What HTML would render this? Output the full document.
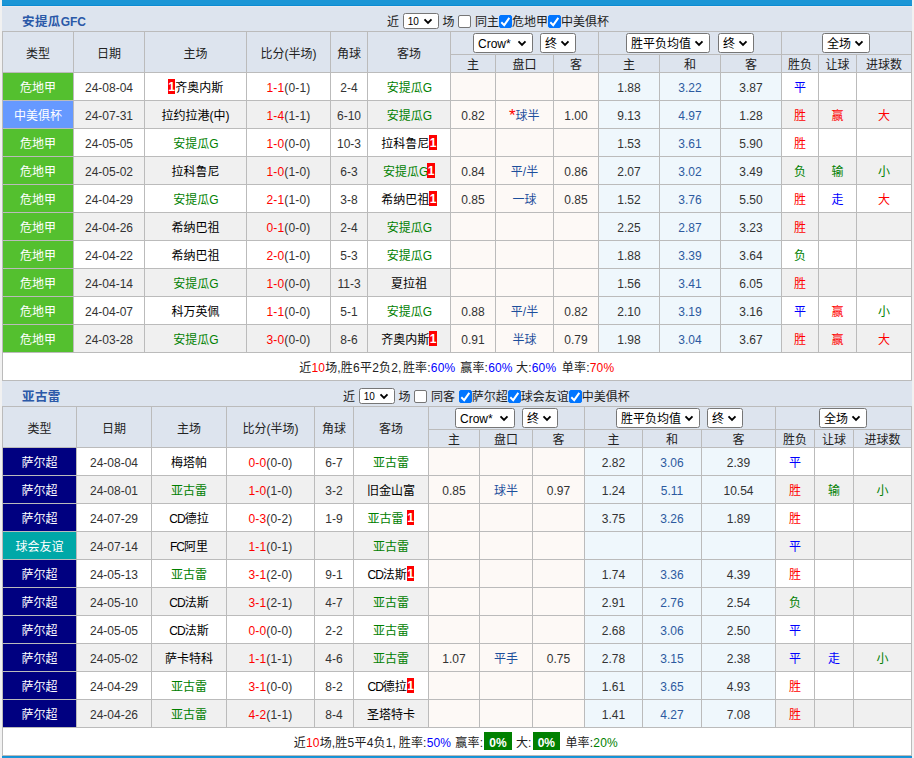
<!DOCTYPE html>
<html lang="zh-CN">
<head>
<meta charset="utf-8">
<title>近期战绩</title>
<style>
html,body{margin:0;padding:0;background:#f1f1f1;}
body{width:914px;height:758px;overflow:hidden;font-family:"Liberation Sans","Noto Sans CJK SC",sans-serif;font-size:12px;color:#333;}
.wrap{position:absolute;left:2px;top:0;width:910px;border-top:5px solid #1b96d6;}
.wrap:before{content:"";display:block;height:1px;background:#0b8bd2;}
.bar{position:relative;height:25px;background:#dde4ee;}
.bar.first{border-top:1px solid #e8eaef;height:24px;}
.bar.first .ctl,.bar.first .ttl{margin-top:-1px;}
.ttl{position:absolute;left:20px;top:4px;line-height:25px;font-family:"Liberation Sans","Noto Sans CJK SC",sans-serif;font-weight:bold;font-size:12.5px;letter-spacing:0.4px;color:#2b59a8;}
.ctl{position:absolute;top:4px;line-height:25px;white-space:pre;color:#222;word-spacing:0.42px;}
table.t{border-collapse:separate;border-spacing:1px;background:#bbb;table-layout:fixed;width:910px;}
table.t td,table.t th{padding:0;text-align:center;font-weight:normal;overflow:hidden;white-space:nowrap;}
tr.h1 th,tr.h2 th{background:#dde4ee;color:#222;}
tr.h1{height:22px;}
tr.h2{height:17px;}
td.n,td.hr{padding-top:2px !important;}
tr.h2 th{line-height:14px;padding-top:3px;}
tr.h1 th{padding-top:0;}
tr.h1 th.sc{padding-top:0;}
tr.o{height:27px;}
tr.o td{background:#fff;}
tr.e{height:27px;}
tr.e td{background:#f0f0f0;}
tr.o td.ah,tr.e td.ah{background:#fdf9f6;}
tr.o td.eu,tr.e td.eu{background:#eff7fc;}
td.k{color:#000;}
td.lg{color:#fff;}
tr td.gt{background:#54c02f;}
tr td.cc{background:#6699ff;}
tr td.sv{background:#000080;}
tr td.fr{background:#00a8a8;}
.me{color:#008000;}
.r{color:#ff0000;}
.b{color:#0000ff;}
.g{color:#008000;}
td.pk{color:#1d4f9c;}
td.dr{color:#2c5aa0;}
.rc{background:#f00;color:#fff;font-weight:bold;display:inline-block;line-height:17px;height:15px;overflow:hidden;width:7.6px;text-align:center;vertical-align:middle;position:relative;top:-3px;}
tr.sm td{background:#fff;height:27px;color:#222;}
.sw2{position:relative;height:27px;text-align:left;}
.sg{position:absolute;top:2px;line-height:27px;white-space:nowrap;letter-spacing:0.2px;}
.z{background:#008000;color:#fff;font-weight:bold;padding:4px 5px 0 5px;margin:0 0 0 1px;letter-spacing:0;}
.sel{display:inline-block;position:relative;box-sizing:border-box;height:20px;border:1px solid #767676;border-radius:2.5px;background:#fff;vertical-align:middle;text-align:left;color:#000;font-size:12px;line-height:18px;font-family:"Liberation Sans","Noto Sans CJK SC",sans-serif;}
.sel .st{position:absolute;left:4px;top:1px;}
.sel .ar{position:absolute;right:5px;top:6px;}
.sw{position:relative;height:22px;}
.sel.ab{position:absolute;top:1px;}
.sel.sm10{height:16px;font-size:10px;line-height:14px;top:-2px;}
.sel.sm10 .ar{top:4px;}
.cb{display:inline-block;box-sizing:border-box;width:13px;height:13px;border:1px solid #767676;border-radius:2px;background:#fff;vertical-align:middle;position:relative;top:-1px;}
.cb.on{background:#0075ff;border-color:#0075ff;}
.cb svg{position:absolute;left:-1px;top:-1px;}
.foot{height:6px;background:#1b96d6;border-top:1px solid #1391d6;margin-top:0;}
.la{font-size:12px;font-weight:bold;letter-spacing:0;}
.as{display:inline-block;width:6px;font-size:17px;line-height:0;text-align:center;position:relative;top:0.5px;left:-0.5px;}
.lt{letter-spacing:-1px;}
td.sx{letter-spacing:0.18px;}
</style>
</head>
<body>
<div class="wrap">
<div class="bar first"><span class="ttl">安提瓜<span class="la">GFC</span></span><span class="ctl" style="left:385px">近 <span class="sel sm10" style="width:36px"><span class="st">10</span><svg class="ar" viewBox="0 0 10 7" width="10" height="7"><path d="M1.5 1.3 L5 4.8 L8.5 1.3" fill="none" stroke="#000" stroke-width="1.9" stroke-linecap="butt" stroke-linejoin="miter"/></svg></span> 场 <span class="cb"></span> 同主<span class="cb on"><svg viewBox="0 0 13 13" width="13" height="13"><path d="M2.3 7.3 L5.2 10.1 L10.3 2.9" fill="none" stroke="#fff" stroke-width="2" stroke-linecap="butt" stroke-linejoin="miter"/></svg></span>危地甲<span class="cb on"><svg viewBox="0 0 13 13" width="13" height="13"><path d="M2.3 7.3 L5.2 10.1 L10.3 2.9" fill="none" stroke="#fff" stroke-width="2" stroke-linecap="butt" stroke-linejoin="miter"/></svg></span>中美俱杯</span></div><table class="t" cellspacing="1" cellpadding="0">
<colgroup><col style="width:70px"><col style="width:70px"><col style="width:101px"><col style="width:83px"><col style="width:36px"><col style="width:82px"><col style="width:44px"><col style="width:57px"><col style="width:44px"><col style="width:60px"><col style="width:60px"><col style="width:60px"><col style="width:36px"><col style="width:37px"><col style="width:54px"></colgroup>
<tr class="h1"><th rowspan="2">类型</th><th rowspan="2">日期</th><th rowspan="2">主场</th><th rowspan="2">比分(半场)</th><th rowspan="2">角球</th><th rowspan="2">客场</th><th colspan="3" class="sc"><div class="sw"><span class="sel ab" style="width:60px;left:22px"><span class="st">Crow*</span><svg class="ar" viewBox="0 0 10 7" width="10" height="7"><path d="M1.5 1.3 L5 4.8 L8.5 1.3" fill="none" stroke="#000" stroke-width="1.9" stroke-linecap="butt" stroke-linejoin="miter"/></svg></span><span class="sel ab" style="width:36px;left:89px"><span class="st">终</span><svg class="ar" viewBox="0 0 10 7" width="10" height="7"><path d="M1.5 1.3 L5 4.8 L8.5 1.3" fill="none" stroke="#000" stroke-width="1.9" stroke-linecap="butt" stroke-linejoin="miter"/></svg></span></div></th><th colspan="3" class="sc"><div class="sw"><span class="sel ab" style="width:84px;left:27px"><span class="st">胜平负均值</span><svg class="ar" viewBox="0 0 10 7" width="10" height="7"><path d="M1.5 1.3 L5 4.8 L8.5 1.3" fill="none" stroke="#000" stroke-width="1.9" stroke-linecap="butt" stroke-linejoin="miter"/></svg></span><span class="sel ab" style="width:36px;left:119px"><span class="st">终</span><svg class="ar" viewBox="0 0 10 7" width="10" height="7"><path d="M1.5 1.3 L5 4.8 L8.5 1.3" fill="none" stroke="#000" stroke-width="1.9" stroke-linecap="butt" stroke-linejoin="miter"/></svg></span></div></th><th colspan="3" class="sc"><div class="sw"><span class="sel ab" style="width:48px;left:40px"><span class="st">全场</span><svg class="ar" viewBox="0 0 10 7" width="10" height="7"><path d="M1.5 1.3 L5 4.8 L8.5 1.3" fill="none" stroke="#000" stroke-width="1.9" stroke-linecap="butt" stroke-linejoin="miter"/></svg></span></div></th></tr>
<tr class="h2"><th>主</th><th>盘口</th><th>客</th><th>主</th><th>和</th><th>客</th><th>胜负</th><th>让球</th><th>进球数</th></tr>
<tr class="o"><td class="lg gt">危地甲</td><td class="n">24-08-04</td><td class="k hr"><span class="rc">1</span>齐奥内斯</td><td class="n sx"><span class="r">1-1</span>(0-1)</td><td class="n">2-4</td><td class="k"><span class="me">安提瓜<span class="lt">G</span></span></td><td class="ah n"></td><td class="ah pk"></td><td class="ah n"></td><td class="eu n">1.88</td><td class="eu dr n">3.22</td><td class="eu n">3.87</td><td class="k"><span class="b">平</span></td><td class="k"></td><td class="k"></td></tr>
<tr class="e"><td class="lg cc">中美俱杯</td><td class="n">24-07-31</td><td class="k">拉约拉港(中)</td><td class="n sx"><span class="r">1-4</span>(1-1)</td><td class="n">6-10</td><td class="k"><span class="me">安提瓜<span class="lt">G</span></span></td><td class="ah n">0.82</td><td class="ah pk"><span class="r as">*</span>球半</td><td class="ah n">1.00</td><td class="eu n">9.13</td><td class="eu dr n">4.97</td><td class="eu n">1.28</td><td class="k"><span class="r">胜</span></td><td class="k"><span class="r">赢</span></td><td class="k"><span class="r">大</span></td></tr>
<tr class="o"><td class="lg gt">危地甲</td><td class="n">24-05-05</td><td class="k"><span class="me">安提瓜<span class="lt">G</span></span></td><td class="n sx"><span class="r">1-0</span>(0-0)</td><td class="n">10-3</td><td class="k hr">拉科鲁尼<span class="rc">1</span></td><td class="ah n"></td><td class="ah pk"></td><td class="ah n"></td><td class="eu n">1.53</td><td class="eu dr n">3.61</td><td class="eu n">5.90</td><td class="k"><span class="r">胜</span></td><td class="k"></td><td class="k"></td></tr>
<tr class="e"><td class="lg gt">危地甲</td><td class="n">24-05-02</td><td class="k">拉科鲁尼</td><td class="n sx"><span class="r">1-0</span>(1-0)</td><td class="n">6-3</td><td class="k hr"><span class="me">安提瓜<span class="lt">G</span></span><span class="rc">1</span></td><td class="ah n">0.84</td><td class="ah pk">平/半</td><td class="ah n">0.86</td><td class="eu n">2.07</td><td class="eu dr n">3.02</td><td class="eu n">3.49</td><td class="k"><span class="g">负</span></td><td class="k"><span class="g">输</span></td><td class="k"><span class="g">小</span></td></tr>
<tr class="o"><td class="lg gt">危地甲</td><td class="n">24-04-29</td><td class="k"><span class="me">安提瓜<span class="lt">G</span></span></td><td class="n sx"><span class="r">2-1</span>(1-0)</td><td class="n">3-8</td><td class="k hr">希纳巴祖<span class="rc">1</span></td><td class="ah n">0.85</td><td class="ah pk">一球</td><td class="ah n">0.85</td><td class="eu n">1.52</td><td class="eu dr n">3.76</td><td class="eu n">5.50</td><td class="k"><span class="r">胜</span></td><td class="k"><span class="b">走</span></td><td class="k"><span class="r">大</span></td></tr>
<tr class="e"><td class="lg gt">危地甲</td><td class="n">24-04-26</td><td class="k">希纳巴祖</td><td class="n sx"><span class="r">0-1</span>(0-0)</td><td class="n">2-4</td><td class="k"><span class="me">安提瓜<span class="lt">G</span></span></td><td class="ah n"></td><td class="ah pk"></td><td class="ah n"></td><td class="eu n">2.25</td><td class="eu dr n">2.87</td><td class="eu n">3.23</td><td class="k"><span class="r">胜</span></td><td class="k"></td><td class="k"></td></tr>
<tr class="o"><td class="lg gt">危地甲</td><td class="n">24-04-22</td><td class="k">希纳巴祖</td><td class="n sx"><span class="r">2-0</span>(1-0)</td><td class="n">5-3</td><td class="k"><span class="me">安提瓜<span class="lt">G</span></span></td><td class="ah n"></td><td class="ah pk"></td><td class="ah n"></td><td class="eu n">1.88</td><td class="eu dr n">3.39</td><td class="eu n">3.64</td><td class="k"><span class="g">负</span></td><td class="k"></td><td class="k"></td></tr>
<tr class="e"><td class="lg gt">危地甲</td><td class="n">24-04-14</td><td class="k"><span class="me">安提瓜<span class="lt">G</span></span></td><td class="n sx"><span class="r">1-0</span>(0-0)</td><td class="n">11-3</td><td class="k">夏拉祖</td><td class="ah n"></td><td class="ah pk"></td><td class="ah n"></td><td class="eu n">1.56</td><td class="eu dr n">3.41</td><td class="eu n">6.05</td><td class="k"><span class="r">胜</span></td><td class="k"></td><td class="k"></td></tr>
<tr class="o"><td class="lg gt">危地甲</td><td class="n">24-04-07</td><td class="k">科万英佩</td><td class="n sx"><span class="r">1-1</span>(0-0)</td><td class="n">5-1</td><td class="k"><span class="me">安提瓜<span class="lt">G</span></span></td><td class="ah n">0.88</td><td class="ah pk">平/半</td><td class="ah n">0.82</td><td class="eu n">2.10</td><td class="eu dr n">3.19</td><td class="eu n">3.16</td><td class="k"><span class="b">平</span></td><td class="k"><span class="r">赢</span></td><td class="k"><span class="g">小</span></td></tr>
<tr class="e"><td class="lg gt">危地甲</td><td class="n">24-03-28</td><td class="k"><span class="me">安提瓜<span class="lt">G</span></span></td><td class="n sx"><span class="r">3-0</span>(0-0)</td><td class="n">8-6</td><td class="k hr">齐奥内斯<span class="rc">1</span></td><td class="ah n">0.91</td><td class="ah pk">半球</td><td class="ah n">0.79</td><td class="eu n">1.98</td><td class="eu dr n">3.04</td><td class="eu n">3.67</td><td class="k"><span class="r">胜</span></td><td class="k"><span class="r">赢</span></td><td class="k"><span class="r">大</span></td></tr>
<tr class="sm"><td colspan="15"><div class="sw2"><span class="sg" style="left:296.2px">近<span class="r">10</span>场,胜6平2负2,</span><span class="sg" style="left:399.9px">胜率:<span class="b">60%</span></span><span class="sg" style="left:457.2px">赢率:<span class="b">60%</span></span><span class="sg" style="left:513.0px">大:<span class="b">60%</span></span><span class="sg" style="left:558.8px">单率:<span class="r">70%</span></span></div></td></tr>
</table>
<div class="bar"><span class="ttl">亚古雷</span><span class="ctl" style="left:341px">近 <span class="sel sm10" style="width:36px"><span class="st">10</span><svg class="ar" viewBox="0 0 10 7" width="10" height="7"><path d="M1.5 1.3 L5 4.8 L8.5 1.3" fill="none" stroke="#000" stroke-width="1.9" stroke-linecap="butt" stroke-linejoin="miter"/></svg></span> 场 <span class="cb"></span> 同客 <span class="cb on"><svg viewBox="0 0 13 13" width="13" height="13"><path d="M2.3 7.3 L5.2 10.1 L10.3 2.9" fill="none" stroke="#fff" stroke-width="2" stroke-linecap="butt" stroke-linejoin="miter"/></svg></span>萨尔超<span class="cb on"><svg viewBox="0 0 13 13" width="13" height="13"><path d="M2.3 7.3 L5.2 10.1 L10.3 2.9" fill="none" stroke="#fff" stroke-width="2" stroke-linecap="butt" stroke-linejoin="miter"/></svg></span>球会友谊<span class="cb on"><svg viewBox="0 0 13 13" width="13" height="13"><path d="M2.3 7.3 L5.2 10.1 L10.3 2.9" fill="none" stroke="#fff" stroke-width="2" stroke-linecap="butt" stroke-linejoin="miter"/></svg></span>中美俱杯</span></div><table class="t" cellspacing="1" cellpadding="0">
<colgroup><col style="width:73px"><col style="width:74px"><col style="width:74px"><col style="width:87px"><col style="width:38px"><col style="width:74px"><col style="width:50px"><col style="width:52px"><col style="width:51px"><col style="width:57px"><col style="width:58px"><col style="width:73px"><col style="width:38px"><col style="width:38px"><col style="width:57px"></colgroup>
<tr class="h1"><th rowspan="2">类型</th><th rowspan="2">日期</th><th rowspan="2">主场</th><th rowspan="2">比分(半场)</th><th rowspan="2">角球</th><th rowspan="2">客场</th><th colspan="3" class="sc"><div class="sw"><span class="sel ab" style="width:60px;left:26px"><span class="st">Crow*</span><svg class="ar" viewBox="0 0 10 7" width="10" height="7"><path d="M1.5 1.3 L5 4.8 L8.5 1.3" fill="none" stroke="#000" stroke-width="1.9" stroke-linecap="butt" stroke-linejoin="miter"/></svg></span><span class="sel ab" style="width:36px;left:93px"><span class="st">终</span><svg class="ar" viewBox="0 0 10 7" width="10" height="7"><path d="M1.5 1.3 L5 4.8 L8.5 1.3" fill="none" stroke="#000" stroke-width="1.9" stroke-linecap="butt" stroke-linejoin="miter"/></svg></span></div></th><th colspan="3" class="sc"><div class="sw"><span class="sel ab" style="width:84px;left:31px"><span class="st">胜平负均值</span><svg class="ar" viewBox="0 0 10 7" width="10" height="7"><path d="M1.5 1.3 L5 4.8 L8.5 1.3" fill="none" stroke="#000" stroke-width="1.9" stroke-linecap="butt" stroke-linejoin="miter"/></svg></span><span class="sel ab" style="width:36px;left:122px"><span class="st">终</span><svg class="ar" viewBox="0 0 10 7" width="10" height="7"><path d="M1.5 1.3 L5 4.8 L8.5 1.3" fill="none" stroke="#000" stroke-width="1.9" stroke-linecap="butt" stroke-linejoin="miter"/></svg></span></div></th><th colspan="3" class="sc"><div class="sw"><span class="sel ab" style="width:48px;left:43px"><span class="st">全场</span><svg class="ar" viewBox="0 0 10 7" width="10" height="7"><path d="M1.5 1.3 L5 4.8 L8.5 1.3" fill="none" stroke="#000" stroke-width="1.9" stroke-linecap="butt" stroke-linejoin="miter"/></svg></span></div></th></tr>
<tr class="h2"><th>主</th><th>盘口</th><th>客</th><th>主</th><th>和</th><th>客</th><th>胜负</th><th>让球</th><th>进球数</th></tr>
<tr class="o"><td class="lg sv">萨尔超</td><td class="n">24-08-04</td><td class="k">梅塔帕</td><td class="n sx"><span class="r">0-0</span>(0-0)</td><td class="n">6-7</td><td class="k"><span class="me">亚古雷</span></td><td class="ah n"></td><td class="ah pk"></td><td class="ah n"></td><td class="eu n">2.82</td><td class="eu dr n">3.06</td><td class="eu n">2.39</td><td class="k"><span class="b">平</span></td><td class="k"></td><td class="k"></td></tr>
<tr class="e"><td class="lg sv">萨尔超</td><td class="n">24-08-01</td><td class="k"><span class="me">亚古雷</span></td><td class="n sx"><span class="r">1-0</span>(1-0)</td><td class="n">3-2</td><td class="k">旧金山富</td><td class="ah n">0.85</td><td class="ah pk">球半</td><td class="ah n">0.97</td><td class="eu n">1.24</td><td class="eu dr n">5.11</td><td class="eu n">10.54</td><td class="k"><span class="r">胜</span></td><td class="k"><span class="g">输</span></td><td class="k"><span class="g">小</span></td></tr>
<tr class="o"><td class="lg sv">萨尔超</td><td class="n">24-07-29</td><td class="k"><span class="lt">CD</span>德拉</td><td class="n sx"><span class="r">0-3</span>(0-2)</td><td class="n">1-9</td><td class="k hr"><span class="me">亚古雷</span> <span class="rc">1</span></td><td class="ah n"></td><td class="ah pk"></td><td class="ah n"></td><td class="eu n">3.75</td><td class="eu dr n">3.26</td><td class="eu n">1.89</td><td class="k"><span class="r">胜</span></td><td class="k"></td><td class="k"></td></tr>
<tr class="e"><td class="lg fr">球会友谊</td><td class="n">24-07-14</td><td class="k"><span class="lt">FC</span>阿里</td><td class="n sx"><span class="r">1-1</span>(0-1)</td><td class="n"></td><td class="k"><span class="me">亚古雷</span></td><td class="ah n"></td><td class="ah pk"></td><td class="ah n"></td><td class="eu n"></td><td class="eu dr n"></td><td class="eu n"></td><td class="k"><span class="b">平</span></td><td class="k"></td><td class="k"></td></tr>
<tr class="o"><td class="lg sv">萨尔超</td><td class="n">24-05-13</td><td class="k"><span class="me">亚古雷</span></td><td class="n sx"><span class="r">3-1</span>(2-0)</td><td class="n">9-1</td><td class="k hr"><span class="lt">CD</span>法斯<span class="rc">1</span></td><td class="ah n"></td><td class="ah pk"></td><td class="ah n"></td><td class="eu n">1.74</td><td class="eu dr n">3.36</td><td class="eu n">4.39</td><td class="k"><span class="r">胜</span></td><td class="k"></td><td class="k"></td></tr>
<tr class="e"><td class="lg sv">萨尔超</td><td class="n">24-05-10</td><td class="k"><span class="lt">CD</span>法斯</td><td class="n sx"><span class="r">3-1</span>(2-1)</td><td class="n">4-7</td><td class="k"><span class="me">亚古雷</span></td><td class="ah n"></td><td class="ah pk"></td><td class="ah n"></td><td class="eu n">2.91</td><td class="eu dr n">2.76</td><td class="eu n">2.54</td><td class="k"><span class="g">负</span></td><td class="k"></td><td class="k"></td></tr>
<tr class="o"><td class="lg sv">萨尔超</td><td class="n">24-05-05</td><td class="k"><span class="lt">CD</span>法斯</td><td class="n sx"><span class="r">0-0</span>(0-0)</td><td class="n">2-2</td><td class="k"><span class="me">亚古雷</span></td><td class="ah n"></td><td class="ah pk"></td><td class="ah n"></td><td class="eu n">2.68</td><td class="eu dr n">3.06</td><td class="eu n">2.50</td><td class="k"><span class="b">平</span></td><td class="k"></td><td class="k"></td></tr>
<tr class="e"><td class="lg sv">萨尔超</td><td class="n">24-05-02</td><td class="k">萨卡特科</td><td class="n sx"><span class="r">1-1</span>(1-1)</td><td class="n">4-6</td><td class="k"><span class="me">亚古雷</span></td><td class="ah n">1.07</td><td class="ah pk">平手</td><td class="ah n">0.75</td><td class="eu n">2.78</td><td class="eu dr n">3.15</td><td class="eu n">2.38</td><td class="k"><span class="b">平</span></td><td class="k"><span class="b">走</span></td><td class="k"><span class="g">小</span></td></tr>
<tr class="o"><td class="lg sv">萨尔超</td><td class="n">24-04-29</td><td class="k"><span class="me">亚古雷</span></td><td class="n sx"><span class="r">3-1</span>(0-0)</td><td class="n">8-2</td><td class="k hr"><span class="lt">CD</span>德拉<span class="rc">1</span></td><td class="ah n"></td><td class="ah pk"></td><td class="ah n"></td><td class="eu n">1.61</td><td class="eu dr n">3.65</td><td class="eu n">4.93</td><td class="k"><span class="r">胜</span></td><td class="k"></td><td class="k"></td></tr>
<tr class="e"><td class="lg sv">萨尔超</td><td class="n">24-04-26</td><td class="k"><span class="me">亚古雷</span></td><td class="n sx"><span class="r">4-2</span>(1-1)</td><td class="n">8-4</td><td class="k">圣塔特卡</td><td class="ah n"></td><td class="ah pk"></td><td class="ah n"></td><td class="eu n">1.41</td><td class="eu dr n">4.27</td><td class="eu n">7.08</td><td class="k"><span class="r">胜</span></td><td class="k"></td><td class="k"></td></tr>
<tr class="sm"><td colspan="15"><div class="sw2"><span class="sg" style="left:290.7px">近<span class="r">10</span>场,胜5平4负1,</span><span class="sg" style="left:395.7px">胜率:<span class="b">50%</span></span><span class="sg" style="left:452.3px">赢率:<span class="z">0%</span></span><span class="sg" style="left:512.9px">大:<span class="z">0%</span></span><span class="sg" style="left:562.4px">单率:<span class="g">20%</span></span></div></td></tr>
</table>
<div class="foot"></div>
</div>
</body>
</html>
